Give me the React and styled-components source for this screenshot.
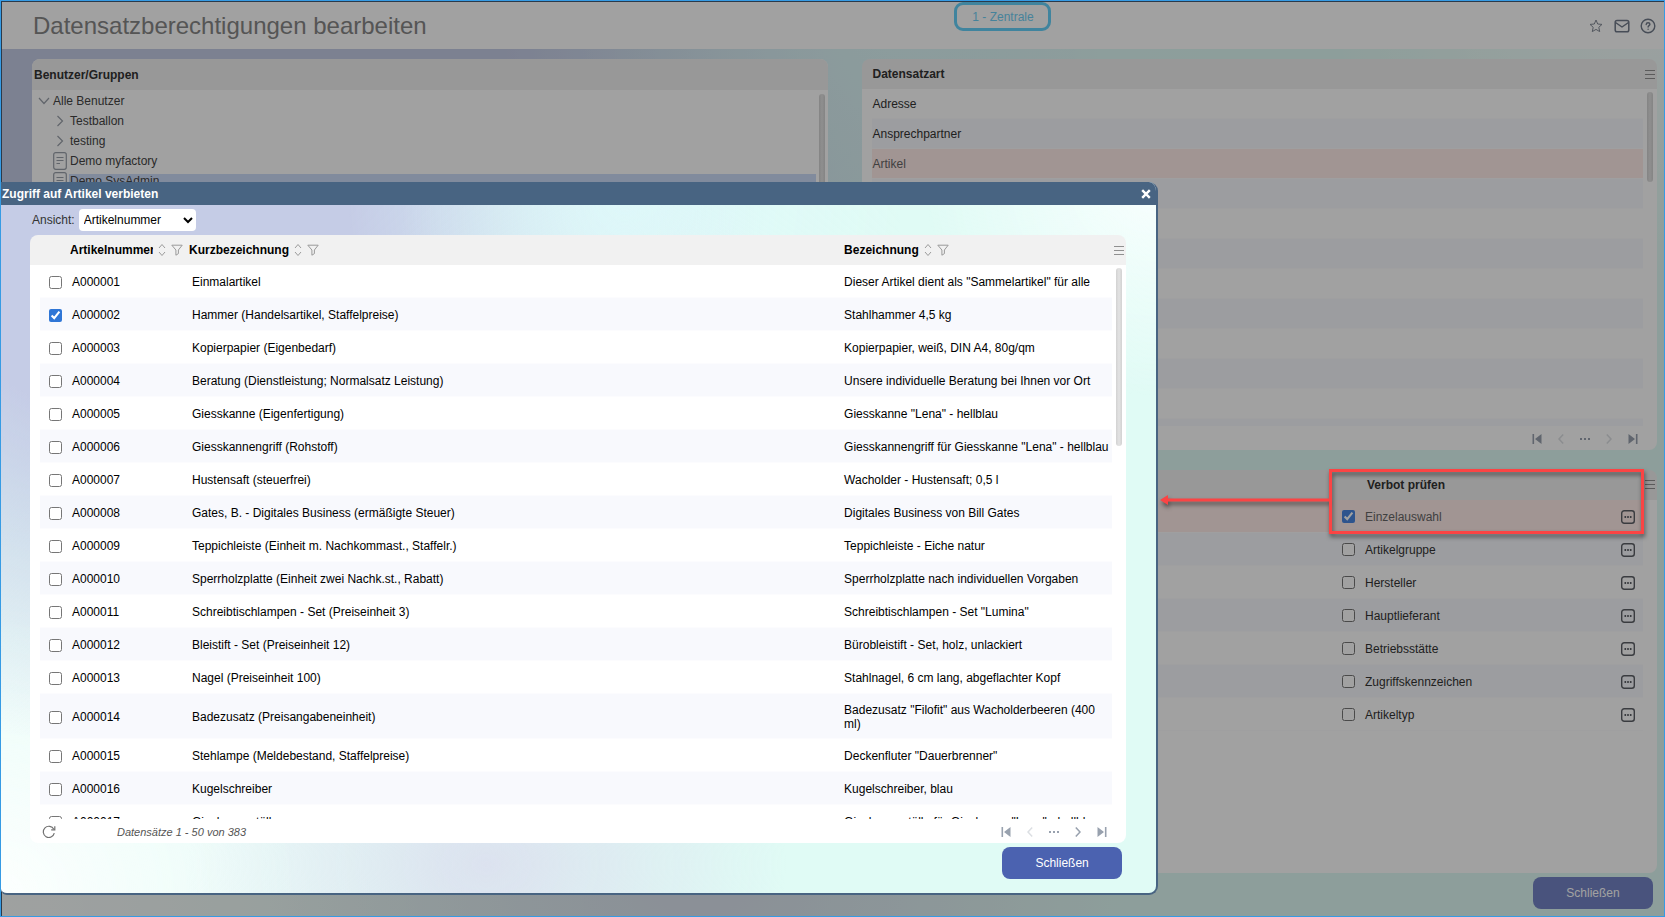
import React, { useState } from "react";
import styled, { createGlobalStyle, css } from "styled-components";

const articles = [
  ["A000001", "Einmalartikel", 'Dieser Artikel dient als "Sammelartikel" für alle'],
  ["A000002", "Hammer (Handelsartikel, Staffelpreise)", "Stahlhammer 4,5 kg"],
  ["A000003", "Kopierpapier (Eigenbedarf)", "Kopierpapier, weiß, DIN A4, 80g/qm"],
  ["A000004", "Beratung (Dienstleistung; Normalsatz Leistung)", "Unsere individuelle Beratung bei Ihnen vor Ort"],
  ["A000005", "Giesskanne (Eigenfertigung)", 'Giesskanne "Lena" - hellblau'],
  ["A000006", "Giesskannengriff (Rohstoff)", 'Giesskannengriff für Giesskanne "Lena" - hellblau'],
  ["A000007", "Hustensaft (steuerfrei)", "Wacholder - Hustensaft; 0,5 l"],
  ["A000008", "Gates, B. - Digitales Business (ermäßigte Steuer)", "Digitales Business von Bill Gates"],
  ["A000009", "Teppichleiste (Einheit m. Nachkommast., Staffelr.)", "Teppichleiste - Eiche natur"],
  ["A000010", "Sperrholzplatte (Einheit zwei Nachk.st., Rabatt)", "Sperrholzplatte nach individuellen Vorgaben"],
  ["A000011", "Schreibtischlampen - Set (Preiseinheit 3)", 'Schreibtischlampen - Set "Lumina"'],
  ["A000012", "Bleistift - Set (Preiseinheit 12)", "Bürobleistift - Set, holz, unlackiert"],
  ["A000013", "Nagel (Preiseinheit 100)", "Stahlnagel, 6 cm lang, abgeflachter Kopf"],
  ["A000014", "Badezusatz (Preisangabeneinheit)", 'Badezusatz "Filofit" aus Wacholderbeeren (400 ml)'],
  ["A000015", "Stehlampe (Meldebestand, Staffelpreise)", 'Deckenfluter "Dauerbrenner"'],
  ["A000016", "Kugelschreiber", "Kugelschreiber, blau"],
  ["A000017", "Gieskannentülle", 'Gieskannentülle für Gieskanne "Lena" - hellblau'],
];

const recordTypes = ["Adresse", "Ansprechpartner", "Artikel", "", "", "", "", "", "", "", "", ""];

const checks = [
  "Einzelauswahl",
  "Artikelgruppe",
  "Hersteller",
  "Hauptlieferant",
  "Betriebsstätte",
  "Zugriffskennzeichen",
  "Artikeltyp",
];

/* icons */
const SortIcon = () => (
  <svg width="8" height="14" viewBox="0 0 8 14" fill="none" stroke="#9a9a9a">
    <path d="M1 5l3-3.5L7 5M1 9l3 3.5L7 9" />
  </svg>
);

const FilterIcon = () => (
  <svg width="12" height="12" viewBox="0 0 12 12" fill="none" stroke="#9a9a9a" strokeLinejoin="round">
    <path d="M.8 1.2h10.4L7.4 6v3.6L4.9 11.2V6z" />
  </svg>
);

const MenuIcon = () => (
  <svg width="10" height="9" viewBox="0 0 10 9" stroke="#909090">
    <path d="M0 .5h10M0 4.5h10M0 8.5h10" />
  </svg>
);

const StarIcon = () => (
  <svg width="16" height="16" viewBox="0 0 16 16" fill="none" stroke="#838a96" strokeLinejoin="round">
    <path d="M8 2l1.7 4 4.3.4-3.2 2.9.9 4.3L8 11.4l-3.7 2.2.9-4.3L2 6.400l4.300-.4z" />
  </svg>
);

const MailIcon = () => (
  <svg width="16" height="16" viewBox="0 0 16 16" fill="none" stroke="#717a8a" strokeWidth="1.500" strokeLinejoin="round">
    <rect x="1.200" y="2.400" width="13.600" height="11.400" rx="1.800" />
    <path d="M1.500 4.500L8 9l6.500-4.500" />
  </svg>
);

const HelpIcon = () => (
  <svg width="16" height="16" viewBox="0 0 16 16" fill="none" stroke="#717a8a" strokeWidth="1.400" strokeLinecap="round">
    <circle cx="8" cy="8" r="6.800" />
    <path d="M6.200 6.500C6.300 5.300 7.100 4.700 8.100 4.700c1.100 0 1.800.7 1.800 1.600 0 1.300-1.800 1.400-1.800 2.700" />
    <path d="M8.100 11.200v.1" />
  </svg>
);

const DocIcon = () => (
  <svg width="14" height="18" viewBox="0 0 14 18" fill="none" stroke="#9aa0aa" strokeWidth="1.200">
    <rect x=".7" y=".7" width="12.600" height="16.600" rx="2" />
    <path d="M3.500 5.500h7M3.500 8.500h7M3.500 11.500h3.500" />
  </svg>
);

const ChevronDown = () => (
  <svg width="12" height="8" viewBox="0 0 12 8" fill="none" stroke="#9aa0aa" strokeWidth="1.200">
    <path d="M1 1l5 5.500L11 1" />
  </svg>
);

const ChevronRight = () => (
  <svg width="8" height="12" viewBox="0 0 8 12" fill="none" stroke="#9aa0aa" strokeWidth="1.200">
    <path d="M1.500 1L6.500 6l-5 5" />
  </svg>
);

const DetailIcon = () => (
  <svg width="14" height="14" viewBox="0 0 14 14" fill="none" stroke="#5c5f66" strokeWidth="1.400">
    <rect x=".7" y=".7" width="12.600" height="12.600" rx="2.500" />
    <path d="M3.500 7h1.600M6.200 7h1.600M8.900 7h1.600" strokeWidth="1.800" />
  </svg>
);

const ReloadIcon = () => (
  <svg width="14" height="14" viewBox="0 0 14 14" fill="none" stroke="#707070" strokeWidth="1.200">
    <path d="M12.300 8.200A5.600 5.600 0 1 1 11.800 4.200" />
    <path d="M12.800 1.300v3.600H9.200" />
  </svg>
);

const FirstIcon = () => (
  <svg width="10" height="10" viewBox="0 0 10 10" fill="currentColor">
    <path d="M.5 0h1.600v10H.5zM9.500 0v10L3 5z" />
  </svg>
);

const LastIcon = () => (
  <svg width="10" height="10" viewBox="0 0 10 10" fill="currentColor">
    <path d="M7.900 0h1.600v10H7.900zM.5 0v10L7 5z" />
  </svg>
);

const PrevIcon = () => (
  <svg width="6" height="10" viewBox="0 0 6 10" fill="none" stroke="currentColor" strokeWidth="1.500">
    <path d="M5.200.5L1 5l4.200 4.500" />
  </svg>
);

const NextIcon = () => (
  <svg width="6" height="10" viewBox="0 0 6 10" fill="none" stroke="currentColor" strokeWidth="1.500">
    <path d="M.8.5L5 5 .8 9.500" />
  </svg>
);

const DotsIcon = () => (
  <svg width="10" height="2" viewBox="0 0 10 2" fill="currentColor">
    <path d="M0 0h2v2H0zM4 0h2v2H4zM8 0h2v2H8z" />
  </svg>
);

const CloseIcon = () => (
  <svg width="10" height="10" viewBox="0 0 10 10" stroke="#fff" strokeWidth="2.400">
    <path d="M1.200 1.200l7.600 7.600M8.800 1.200L1.200 8.800" />
  </svg>
);

const Pager = ({ lastPage }) => {
  return (
    <PagerBar>
      <PageButton aria-label="Erste Seite"><FirstIcon /></PageButton>
      <PageButton aria-label="Vorherige Seite" $off><PrevIcon /></PageButton>
      <PageButton aria-label="Seite wählen"><DotsIcon /></PageButton>
      <PageButton aria-label="Nächste Seite" $off={lastPage}><NextIcon /></PageButton>
      <PageButton aria-label="Letzte Seite"><LastIcon /></PageButton>
    </PagerBar>
  );
};

const ColumnHead = ({ title }) => (
  <HeadInner>
    <HeadText>{title}</HeadText>
    <SortIcon />
    <FilterIcon />
  </HeadInner>
);

const ArticleDialog = () => {
  const [selected, setSelected] = useState(["A000002"]);

  const toggle = (no) => {
    setSelected(selected.includes(no) ? selected.filter((n) => n !== no) : [...selected, no]);
  };

  return (
    <Dialog role="dialog" aria-labelledby="dialog-title">
      <DialogBar>
        <DialogTitle id="dialog-title">Zugriff auf Artikel verbieten</DialogTitle>
        <IconButton aria-label="Fenster schließen"><CloseIcon /></IconButton>
      </DialogBar>
      <Toolbar>
        <label htmlFor="view">Ansicht:</label>
        <ViewSelect id="view" defaultValue="Artikelnummer">
          <option>Artikelnummer</option>
        </ViewSelect>
      </Toolbar>
      <DialogPanel>
        <PanelBody>
          <Scroller>
            <Table>
              <colgroup>
                <col style={{ width: 30 }} />
                <col style={{ width: 119 }} />
                <col />
                <col style={{ width: 268 }} />
              </colgroup>
              <thead>
                <tr>
                  <th />
                  <th><ColumnHead title="Artikelnummer" /></th>
                  <th><ColumnHead title="Kurzbezeichnung" /></th>
                  <th><ColumnHead title="Bezeichnung" /></th>
                </tr>
              </thead>
              <tbody>
                {articles.map(([no, short, name]) => (
                  <Row key={no}>
                    <Cell $pad={9}>
                      <Check
                        type="checkbox"
                        aria-label={no}
                        checked={selected.includes(no)}
                        onChange={() => toggle(no)}
                      />
                    </Cell>
                    <Cell $pad={2}>{no}</Cell>
                    <Cell $pad={3}>{short}</Cell>
                    <Cell>{name}</Cell>
                  </Row>
                ))}
              </tbody>
            </Table>
          </Scroller>
          <Side>
            <SideMenu aria-label="Menü"><MenuIcon /></SideMenu>
            <Thumb $height={178} />
          </Side>
        </PanelBody>
        <Footer>
          <IconButton aria-label="Aktualisieren"><ReloadIcon /></IconButton>
          <Count>Datensätze 1 - 50 von 383</Count>
          <Pager />
        </Footer>
      </DialogPanel>
      <DialogActions>
        <MainButton>Schließen</MainButton>
      </DialogActions>
    </Dialog>
  );
};

const App = () => {
  return (
    <Page>
      <GlobalStyle />
      <Header>
        <Title>Datensatzberechtigungen bearbeiten</Title>
        <Badge>1 - Zentrale</Badge>
        <HeaderIcons>
          <IconButton aria-label="Favorit"><StarIcon /></IconButton>
          <IconButton aria-label="Nachricht"><MailIcon /></IconButton>
          <IconButton aria-label="Hilfe"><HelpIcon /></IconButton>
        </HeaderIcons>
      </Header>

      <Content>
        {/* users and groups */}
        <TreePanel>
          <TreeHead>Benutzer/Gruppen</TreeHead>
          <TreeBody>
            <Tree>
              <TreeRow $indent={6}><ChevronDown /><TreeLabel>Alle Benutzer</TreeLabel></TreeRow>
              <TreeRow $indent={21}><TreeIcon><ChevronRight /></TreeIcon><TreeLabel>Testballon</TreeLabel></TreeRow>
              <TreeRow $indent={21}><TreeIcon><ChevronRight /></TreeIcon><TreeLabel>testing</TreeLabel></TreeRow>
              <TreeRow $indent={21}><TreeIcon><DocIcon /></TreeIcon><TreeLabel>Demo myfactory</TreeLabel></TreeRow>
              <TreeRow $indent={21}><TreeIcon><DocIcon /></TreeIcon><TreeLabel $active>Demo SysAdmin</TreeLabel></TreeRow>
            </Tree>
            <TreeSide><Thumb $height={160} /></TreeSide>
          </TreeBody>
        </TreePanel>

        <RightColumn>
          {/* record types */}
          <TypePanel>
            <PanelBody>
              <Scroller>
                <Table $tight>
                  <thead>
                    <tr><PlainHead $pad={1}>Datensatzart</PlainHead></tr>
                  </thead>
                  <tbody>
                    {recordTypes.map((type, i) => (
                      <Row key={i} $active={type === "Artikel"}>
                        <Cell $pad={1}>{type}</Cell>
                      </Row>
                    ))}
                  </tbody>
                </Table>
              </Scroller>
              <Side>
                <SideMenu aria-label="Menü"><MenuIcon /></SideMenu>
                <Thumb $height={90} />
              </Side>
            </PanelBody>
            <Footer><Pager lastPage /></Footer>
          </TypePanel>

          {/* checks for the chosen record type */}
          <CheckPanel>
            <PanelBody>
              <Scroller>
                <Table>
                  <colgroup>
                    <col />
                    <col style={{ width: 310 }} />
                  </colgroup>
                  <thead>
                    <tr><th /><PlainHead $pad={34}>Verbot prüfen</PlainHead></tr>
                  </thead>
                  <tbody>
                    {checks.map((name, i) => (
                      <Row key={name} $active={i === 0}>
                        <Cell />
                        <Cell $pad={9}>
                          <CheckLine>
                            <CheckLabel>
                              <Check type="checkbox" $muted defaultChecked={i === 0} />
                              {name}
                            </CheckLabel>
                            <IconButton aria-label={name}><DetailIcon /></IconButton>
                          </CheckLine>
                        </Cell>
                      </Row>
                    ))}
                  </tbody>
                </Table>
              </Scroller>
              <Side><SideMenu aria-label="Menü"><MenuIcon /></SideMenu></Side>
            </PanelBody>
            <Marker>
              <Arrow width="172" height="12" viewBox="0 0 172 12">
                <path d="M8 4.500h164v3H8V11L0 6l8-5z" fill="#fb4444" />
              </Arrow>
            </Marker>
          </CheckPanel>
        </RightColumn>
      </Content>

      <PageActions>
        <MainButton $muted>Schließen</MainButton>
      </PageActions>

      <Shade />
      <ArticleDialog />
    </Page>
  );
};

const GlobalStyle = createGlobalStyle`
  * {
    box-sizing: border-box;
  }
  body {
    margin: 0;
    font-family: "Liberation Sans", Arial, sans-serif;
    font-size: 12px;
    line-height: 14px;
    color: #000;
  }
  button, select, input {
    font: inherit;
  }
  svg {
    display: block;
    flex-shrink: 0;
  }
`;

const softBackground = css`
  background:
    radial-gradient(ellipse 24% 50% at 54% 0, #dff9fa 0, transparent 100%),
    radial-gradient(ellipse 52% 75% at 14% 5%, #c5cce6 0, #c5cce6 40%, transparent 100%),
    radial-gradient(ellipse 26% 30% at 42% 96%, #dce2ef 0, transparent 100%),
    radial-gradient(ellipse 40% 60% at 0 100%, #fcfffe 0, transparent 100%),
    radial-gradient(ellipse 20% 30% at 100% 0, #f8fffe 0, transparent 100%),
    #e0fbf5;
`;

const Page = styled.div`
  position: relative;
  display: flex;
  flex-direction: column;
  height: 100vh;
  border: 1px solid #369be4;
  overflow: hidden;
  color: #333;
  ${softBackground}
`;

const Header = styled.header`
  display: grid;
  grid-template-columns: 57% auto 1fr;
  height: 48px;
  padding-right: 8px;
  background: #fff;
`;

const Title = styled.h1`
  margin: 0;
  padding-left: 32px;
  font-size: 24px;
  font-weight: normal;
  line-height: 50px;
  color: #878787;
  white-space: nowrap;
`;

const Badge = styled.div`
  height: 29px;
  margin: 1px 0 0 10px;
  padding: 0 14px 0 15px;
  border: 3px solid #66d2fa;
  border-radius: 9px;
  line-height: 24px;
  color: #70d0f5;
`;

const HeaderIcons = styled.div`
  display: flex;
  align-items: center;
  justify-content: flex-end;
  gap: 10px;
`;

const IconButton = styled.button`
  display: flex;
  align-items: center;
  justify-content: center;
  padding: 0;
  border: 0;
  background: none;
  cursor: pointer;
`;

const Content = styled.main`
  display: grid;
  grid-template-columns: 1fr 1fr;
  flex: 1;
  gap: 34px;
  min-height: 0;
  padding: 10px 7px 0 31px;
`;

const RightColumn = styled.div`
  display: flex;
  flex-direction: column;
  gap: 20px;
  min-height: 0;
`;

/* the grey strip on top is the column head */
const Panel = styled.section`
  display: flex;
  flex-direction: column;
  min-height: 0;
  border-radius: 8px;
  background: linear-gradient(#f1f1f1 30px, #fff 30px);
`;

const TreePanel = styled(Panel)`
  background: #fff;
`;

const TypePanel = styled(Panel)`
  flex: 0 0 48%;
`;

const CheckPanel = styled(Panel)`
  position: relative;
  flex: 1;
`;

const DialogPanel = styled(Panel)`
  flex: 1;
  margin: 0 30px 0 29px;
`;

const TreeHead = styled.h2`
  height: 31px;
  margin: 0;
  padding-left: 2px;
  border-radius: 8px 8px 0 0;
  background: #f1f1f1;
  font-size: 12px;
  line-height: 32px;
`;

const TreeBody = styled.div`
  display: flex;
  flex: 1;
  padding-top: 1px;
`;

const Tree = styled.ul`
  flex: 1;
  margin: 0;
  padding: 0;
  list-style: none;
`;

const TreeRow = styled.li`
  display: flex;
  align-items: center;
  gap: 2px;
  height: 20px;
  padding-left: ${(props) => props.$indent}px;
`;

const TreeIcon = styled.span`
  display: flex;
  justify-content: center;
  width: 14px;
`;

const TreeLabel = styled.span`
  flex: 1;
  padding-left: 1px;
  line-height: 15px;
  color: #444;
  background: ${(props) => (props.$active ? "#cddcf9" : "none")};
`;

const PanelBody = styled.div`
  display: flex;
  flex: 1;
  min-height: 0;
  padding-left: 10px;
`;

const Scroller = styled.div`
  flex: 1;
  min-width: 0;
  overflow: hidden;
`;

const Side = styled.div`
  display: flex;
  flex-direction: column;
  align-items: center;
  gap: 3px;
  width: 14px;
`;

const TreeSide = styled(Side)`
  width: 12px;
  padding-top: 3px;
`;

const SideMenu = styled(IconButton)`
  height: 30px;
`;

const Thumb = styled.div`
  width: 6px;
  height: ${(props) => props.$height}px;
  border-radius: 3px;
  background: linear-gradient(90deg, #d2d2d2, #e3e3e3 50%, #d2d2d2);
`;

const Table = styled.table`
  width: 100%;
  table-layout: fixed;
  border-collapse: separate;
  border-spacing: 0;

  th {
    height: 30px;
    padding: 0;
    text-align: left;
  }
  td {
    height: ${(props) => (props.$tight ? 30 : 33)}px;
    padding-top: ${(props) => (props.$tight ? 7 : 9)}px;
    padding-bottom: ${(props) => (props.$tight ? 6 : 7)}px;
  }
`;

const PlainHead = styled.th`
  && {
    padding-left: ${(props) => props.$pad}px;
  }
`;

const HeadInner = styled.div`
  display: flex;
  align-items: center;
  gap: 5px;
  padding-right: 6px;
`;

const HeadText = styled.span`
  min-width: 0;
  overflow: hidden;
  white-space: nowrap;
`;

const Row = styled.tr`
  color: ${(props) => (props.$active ? "#666" : "inherit")};
  background: ${(props) => (props.$active ? "#ffece9" : "#fff")};

  &:nth-child(even) {
    background: #f8f9fd;
  }
`;

const Cell = styled.td`
  padding-left: ${(props) => props.$pad || 0}px;
  padding-right: 0;
  border-bottom: 1px solid #fcfcfe;
  vertical-align: middle;
`;

const Check = styled.input`
  display: block;
  width: 13px;
  height: 13px;
  margin: 0;
  accent-color: ${(props) => (props.$muted ? "#4a86e0" : "#2f76d6")};
`;

const CheckLine = styled.div`
  display: flex;
  align-items: center;
  justify-content: space-between;
  padding-right: 8px;
`;

const CheckLabel = styled.label`
  display: flex;
  align-items: center;
  gap: 10px;
`;

const Footer = styled.footer`
  display: flex;
  align-items: center;
  height: 24px;
  padding: 2px 12px 0 12px;
`;

const Count = styled.span`
  padding-left: 61px;
  font-size: 11px;
  font-style: italic;
  color: #555;
`;

const PagerBar = styled.nav`
  display: flex;
  margin-left: auto;
`;

const PageButton = styled(IconButton)`
  width: 24px;
  height: 16px;
  color: ${(props) => (props.$off ? "#dcdfe3" : "#98a1ae")};
`;

const MainButton = styled.button`
  width: 120px;
  height: 32px;
  border: 0;
  border-radius: 8px;
  background: ${(props) => (props.$muted ? "#7484c6" : "#4b62b0")};
  color: #fff;
  cursor: pointer;
`;

const PageActions = styled.div`
  display: flex;
  justify-content: flex-end;
  padding: 4px 11px 7px;
`;

/* red frame round the chosen check, with an arrow to the dialog */
const Marker = styled.div`
  position: absolute;
  z-index: 3;
  top: -1px;
  right: 13px;
  width: 315px;
  height: 65px;
  border: 3px solid #fb4444;
  filter: drop-shadow(1px 3px 2px rgba(0, 0, 0, 0.5));
  pointer-events: none;
`;

const Arrow = styled.svg`
  position: absolute;
  top: 22px;
  right: 100%;
`;

const Shade = styled.div`
  position: absolute;
  z-index: 1;
  inset: 0;
  background: rgba(0, 0, 0, 0.37);
  box-shadow: inset 1px 1px 0 #2a3a4b;
`;

const Dialog = styled.div`
  position: absolute;
  z-index: 2;
  top: 181px;
  bottom: 21px;
  left: 0;
  display: flex;
  flex-direction: column;
  width: calc(70% - 7px);
  border: solid #486482;
  border-width: 0 2px 2px 0;
  border-radius: 0 9px 9px 6px;
  overflow: hidden;
  color: #000;
  ${softBackground}
`;

const DialogBar = styled.div`
  display: flex;
  align-items: center;
  justify-content: space-between;
  height: 23px;
  padding: 1px 5px 0 1px;
  background: #486482;
`;

const DialogTitle = styled.h2`
  margin: 0;
  font-size: 12px;
  line-height: 24px;
  color: #fff;
`;

const Toolbar = styled.div`
  display: flex;
  align-items: center;
  gap: 4px;
  height: 30px;
  padding-left: 31px;
  color: #333;
`;

const ViewSelect = styled.select`
  width: 117px;
  height: 22px;
  padding-left: 1px;
  border: 0;
  border-radius: 4px;
  background: #fff;
  color: #000;
`;

const DialogActions = styled.div`
  display: flex;
  justify-content: flex-end;
  padding: 4px 34px 14px;
`;

export default App;
